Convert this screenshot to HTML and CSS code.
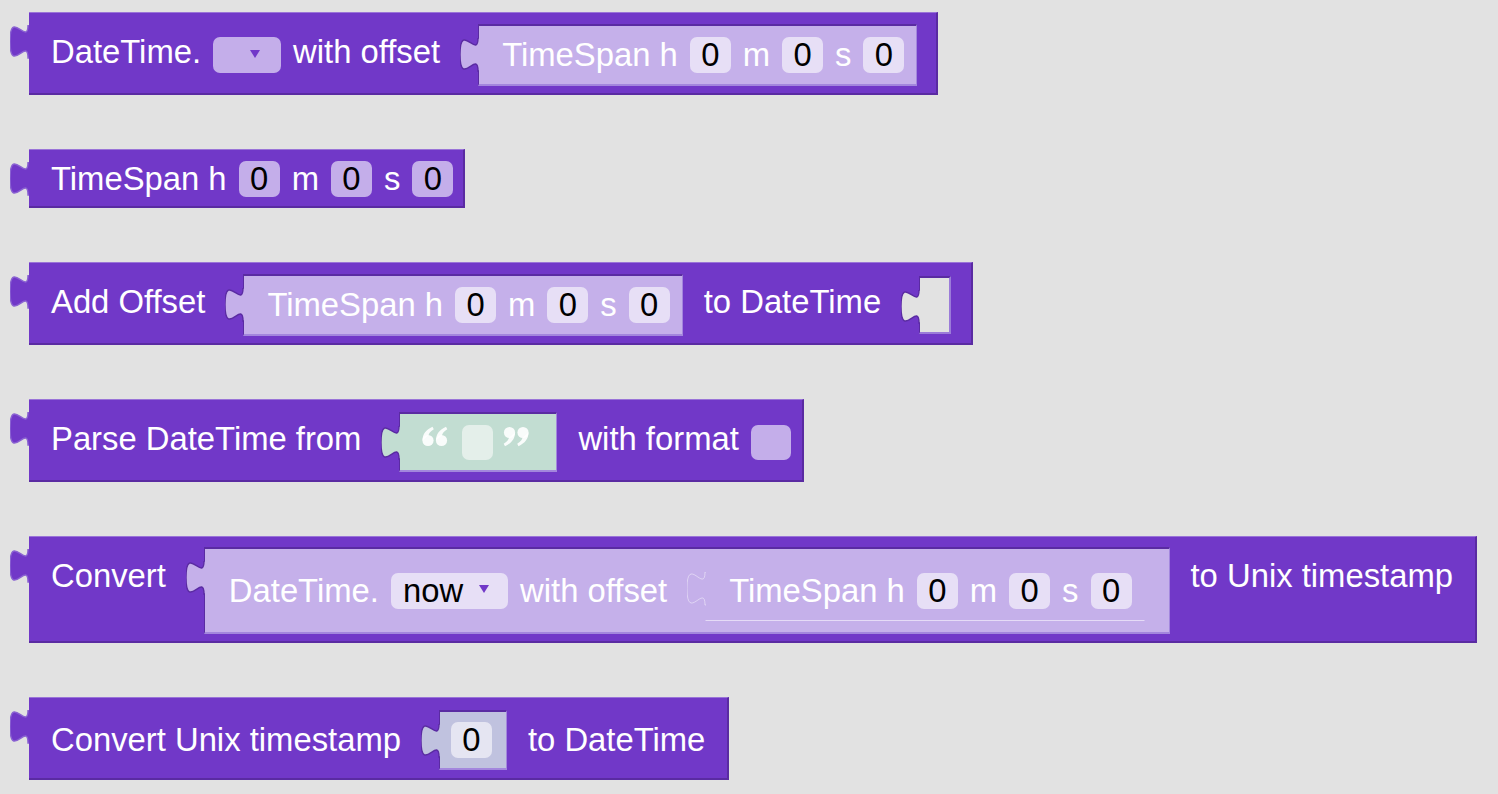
FILE: index.html
```html
<!DOCTYPE html>
<html>
<head>
<meta charset="utf-8">
<link rel="stylesheet" href="styles.css">
</head>
<body>
<svg class="defs" width="0" height="0">
  <defs>
    <symbol id="tab" viewBox="0 0 19 34">
      <path d="M19.5,0 L18,0 C18,22 0,-17.6 0,16.5 C0,50.6 18,11 18,33 L19.5,33"/>
    </symbol>
    <symbol id="qopen" viewBox="0 0 26 21">
      <circle cx="6" cy="14.5" r="5.6"/>
      <path d="M0.5,14.5 C0.5,8 4,4 10.5,0.8 L11.8,3.2 C8,5.6 6.8,7.8 6.6,9.2 Z"/>
      <circle cx="19.5" cy="14.5" r="5.6"/>
      <path d="M14,14.5 C14,8 17.5,4 24,0.8 L25.3,3.2 C21.5,5.6 20.3,7.8 20.1,9.2 Z"/>
    </symbol>
    <symbol id="qclose" viewBox="0 0 26 21">
      <circle cx="6.5" cy="6.5" r="5.6"/>
      <path d="M12,6.5 C12,13 8.5,17 2,20.2 L0.7,17.8 C4.5,15.4 5.7,13.2 5.9,11.8 Z"/>
      <circle cx="20" cy="6.5" r="5.6"/>
      <path d="M25.5,6.5 C25.5,13 22,17 15.5,20.2 L14.2,17.8 C18,15.4 19.2,13.2 19.4,11.8 Z"/>
    </symbol>
  </defs>
</svg>

<div class="canvas">

  <!-- 1 -->
  <div class="block tall">
    <svg class="otab"><use href="#tab"/></svg>
    <span class="lbl up">DateTime.</span>
    <span class="dd empty"><i class="arr"></i></span>
    <span class="lbl up">with offset</span>
    <div class="child ts">
      <svg class="itab"><use href="#tab"/></svg>
      <span class="lbl">TimeSpan h</span><span class="num">0</span>
      <span class="lbl">m</span><span class="num">0</span>
      <span class="lbl">s</span><span class="num">0</span>
    </div>
  </div>

  <!-- 2 -->
  <div class="block flat">
    <svg class="otab"><use href="#tab"/></svg>
    <span class="lbl">TimeSpan h</span><span class="num dark">0</span>
    <span class="lbl">m</span><span class="num dark">0</span>
    <span class="lbl">s</span><span class="num dark">0</span>
  </div>

  <!-- 3 -->
  <div class="block tall">
    <svg class="otab"><use href="#tab"/></svg>
    <span class="lbl up">Add Offset</span>
    <div class="child ts">
      <svg class="itab"><use href="#tab"/></svg>
      <span class="lbl">TimeSpan h</span><span class="num">0</span>
      <span class="lbl">m</span><span class="num">0</span>
      <span class="lbl">s</span><span class="num">0</span>
    </div>
    <span class="lbl up">to DateTime</span>
    <div class="slot-empty">
      <svg class="itab etab"><use href="#tab"/></svg>
    </div>
  </div>

  <!-- 4 -->
  <div class="block tall60">
    <svg class="otab"><use href="#tab"/></svg>
    <span class="lbl up">Parse DateTime from</span>
    <div class="child str">
      <svg class="itab stab"><use href="#tab"/></svg>
      <svg class="quote qo"><use href="#qopen"/></svg>
      <span class="sfield"></span>
      <svg class="quote qc"><use href="#qclose"/></svg>
    </div>
    <span class="lbl up">with format</span>
    <span class="num dark blank"></span>
  </div>

  <!-- 5 -->
  <div class="block big">
    <svg class="otab"><use href="#tab"/></svg>
    <span class="lbl top">Convert</span>
    <div class="child dt">
      <svg class="itab"><use href="#tab"/></svg>
      <span class="lbl">DateTime.</span>
      <span class="dd light"><span class="ddtext">now</span><i class="arr"></i></span>
      <span class="lbl">with offset</span>
      <div class="child ts ghost">
        <svg class="itab gtab"><use href="#tab"/></svg>
        <span class="lbl">TimeSpan h</span><span class="num">0</span>
        <span class="lbl">m</span><span class="num">0</span>
        <span class="lbl">s</span><span class="num">0</span>
      </div>
    </div>
    <span class="lbl top last">to Unix timestamp</span>
  </div>

  <!-- 6 -->
  <div class="block tall60">
    <svg class="otab"><use href="#tab"/></svg>
    <span class="lbl">Convert Unix timestamp</span>
    <div class="child nb">
      <svg class="itab ntab"><use href="#tab"/></svg>
      <span class="num nbf">0</span>
    </div>
    <span class="lbl last">to DateTime</span>
  </div>

</div>
</body>
</html>
```

FILE: styles.css
```css
* { box-sizing: border-box; }

html, body {
  margin: 0;
  padding: 0;
}

body {
  width: 1498px;
  height: 794px;
  overflow: hidden;
  background: #e2e2e2;
  font-family: "Liberation Sans", Arial, sans-serif;
  font-size: 32.8px;
  line-height: 36px;
  color: #ffffff;
}

.defs {
  position: absolute;
  width: 0;
  height: 0;
}

.canvas {
  display: flex;
  flex-direction: column;
  align-items: flex-start;
  gap: 54px;
  padding: 12px 0 0 29px;
}

/* ---------- blocks ---------- */

.block {
  position: relative;
  display: flex;
  align-items: center;
  gap: 12px;
  background: #7138c8;
  border-top: 1px solid #9a74d8;
  border-right: 2px solid #5a2ba2;
  border-bottom: 2px solid #5a2ba2;
  padding: 11px 11px 7px 22px;
}

.block.flat { padding-top: 11px; padding-bottom: 9px; padding-right: 10px; }
.block.tall { padding-top: 11px; padding-bottom: 7px; padding-right: 10px; }
.block.tall60 { padding-top: 12px; padding-bottom: 8px; }
.block.big { padding-top: 10px; padding-bottom: 7px; align-items: center; }

.otab {
  position: absolute;
  left: -19px;
  top: 12px;
  width: 19px;
  height: 34px;
  overflow: visible;
  fill: #7138c8;
  stroke: #8a62d2;
  stroke-width: 1.4;
}

.lbl {
  white-space: nowrap;
  display: block;
}

.lbl.up { margin-bottom: 6px; }
.lbl.top { align-self: flex-start; margin-top: 11px; }
.lbl.last { margin-right: 11px; }

/* ---------- fields ---------- */

.num {
  width: 41px;
  height: 36px;
  border-radius: 7px;
  background: #e7dff6;
  color: #000;
  display: flex;
  align-items: center;
  justify-content: center;
}

.num.dark { background: #c4aeea; }
.num.blank { width: 40px; height: 35px; }

.dd {
  display: flex;
  align-items: center;
  height: 36px;
  border-radius: 7px;
  background: #c4aeea;
  color: #000;
  padding: 0 19px 0 12px;
}

.dd.empty { padding-left: 37px; padding-right: 21px; }
.dd.light { background: #e7dff6; }

.ddtext { display: block; }

.arr {
  display: block;
  width: 0;
  height: 0;
  border-left: 5.5px solid transparent;
  border-right: 5.5px solid transparent;
  border-top: 8px solid #7138c8;
  margin-top: -3px;
}

.dd.light .arr { margin-left: 16px; }

/* ---------- child blocks ---------- */

.child {
  position: relative;
  display: flex;
  align-items: center;
  gap: 12px;
  height: 62px;
  background: #c5b0ea;
  border-top: 2px solid #5a2ba2;
  border-left: 1px solid #5a2ba2;
  border-bottom: 2px solid #a386dd;
  border-right: 1px solid #a386dd;
  padding: 0 12px 0 23px;
  margin-left: 26px;
  margin-right: 9px;
}

.itab {
  position: absolute;
  left: -19px;
  top: 12px;
  width: 19px;
  height: 34px;
  overflow: visible;
  fill: #c5b0ea;
  stroke: #5a2ba2;
  stroke-width: 1.4;
}

.child.dt {
  height: 87px;
  padding-left: 24px;
  padding-right: 15px;
  margin-right: 9px;
}

.child.ghost {
  background: transparent;
  border-top: 1px solid transparent;
  border-left: 1px solid transparent;
  border-right: 1px solid transparent;
  border-bottom: 1px solid rgba(255, 255, 255, 0.55);
  height: 61px;
  margin-right: 9px;
}

.gtab {
  fill: #c5b0ea;
  stroke: rgba(255, 255, 255, 0.45);
  stroke-width: 1;
  top: 11px;
}

/* string block */
.child.str {
  height: 60px;
  background: #c2ddd2;
  padding: 0 27px 0 22px;
  gap: 0;
}

.stab { fill: #c2ddd2; }

.quote {
  display: block;
  width: 26px;
  height: 21px;
  fill: rgba(255, 255, 255, 0.9);
  overflow: visible;
  margin-top: -12px;
}

.quote.qo { margin-right: 14px; }
.quote.qc { margin-left: 10px; }

.sfield {
  display: block;
  width: 31px;
  height: 35px;
  border-radius: 7px;
  background: #e4efea;
}

/* number block */
.child.nb {
  height: 60px;
  background: #c0c2df;
  padding: 0 14px 0 11px;
}

.ntab { fill: #c0c2df; }

.num.nbf { background: #e5e5f2; }

/* empty slot */
.slot-empty {
  position: relative;
  width: 32px;
  height: 58px;
  background: #e2e2e2;
  border-top: 2px solid #5a2ba2;
  border-left: 1px solid #5a2ba2;
  border-right: 2px solid #9b7bd9;
  border-bottom: 2px solid #9b7bd9;
  margin-left: 26px;
  margin-right: 10px;
}

.etab { fill: #e2e2e2; }
```
